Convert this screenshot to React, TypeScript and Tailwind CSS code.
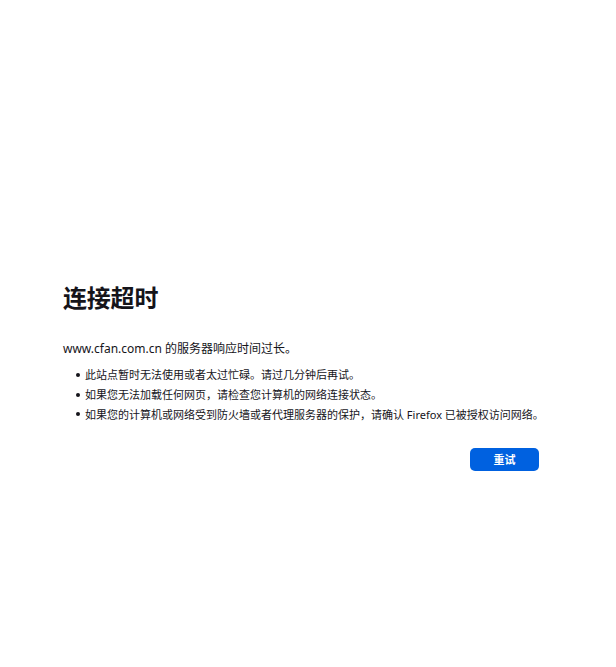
const items = [
  '此站点暂时无法使用或者太过忙碌。请过几分钟后再试。',
  '如果您无法加载任何网页，请检查您计算机的网络连接状态。',
  '如果您的计算机或网络受到防火墙或者代理服务器的保护，请确认 Firefox 已被授权访问网络。',
];

export default function App() {
  return (
    <div
      className="min-h-screen bg-white text-[#15141a] pt-[283px]"
      style={{ fontFamily: '"Noto Sans", "Noto Sans CJK SC", sans-serif' }}
    >
      <div className="ml-[63px] w-[476px]">
        <h1 className="text-[24px] font-bold leading-[30px] tracking-[-0.2px]">连接超时</h1>
        <p className="mt-[26px] text-[12px] leading-[20px]">www.cfan.com.cn 的服务器响应时间过长。</p>
        <ul className="mt-[6px] pl-[13px] text-[11px] leading-[19.8px]">
          {items.map((t) => (
            <li key={t} className="flex items-center whitespace-nowrap">
              <span className="w-[4px] h-[4px] rounded-full bg-[#15141a] mr-[5px] shrink-0" />
              {t}
            </li>
          ))}
        </ul>
        <div className="mt-[24px] flex justify-end">
          <button className="w-[69px] h-[23px] rounded-[5px] bg-[#0061e0] text-white text-[11px] font-bold">
            重试
          </button>
        </div>
      </div>
    </div>
  );
}
